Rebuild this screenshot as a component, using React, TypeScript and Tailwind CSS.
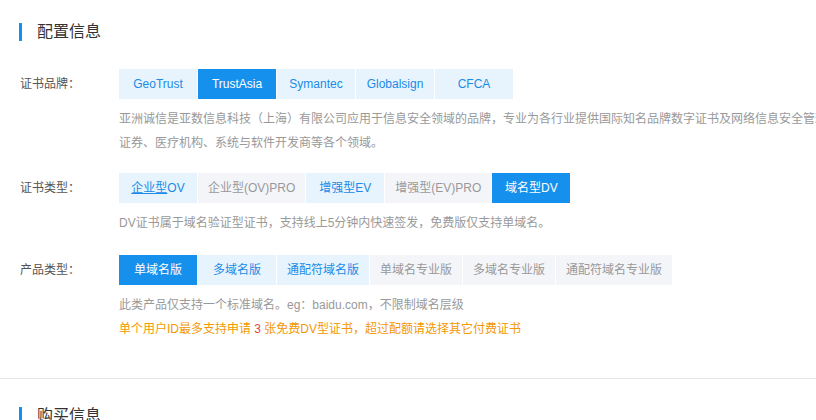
import { useState } from "react";

type Tone = "on" | "off";

interface OptionItem {
    label: React.ReactNode;
    tone: Tone;
}

const brands: OptionItem[] = [
    { label: "GeoTrust", tone: "on" },
    { label: "TrustAsia", tone: "on" },
    { label: "Symantec", tone: "on" },
    { label: "Globalsign", tone: "on" },
    { label: "CFCA", tone: "on" },
];

const certTypes: OptionItem[] = [
    { label: <><span className="underline">企业型</span>OV</>, tone: "on" },
    { label: "企业型(OV)PRO", tone: "off" },
    { label: "增强型EV", tone: "on" },
    { label: "增强型(EV)PRO", tone: "off" },
    { label: "域名型DV", tone: "on" },
];

const productTypes: OptionItem[] = [
    { label: "单域名版", tone: "on" },
    { label: "多域名版", tone: "on" },
    { label: "通配符域名版", tone: "on" },
    { label: "单域名专业版", tone: "off" },
    { label: "多域名专业版", tone: "off" },
    { label: "通配符域名专业版", tone: "off" },
];

const SectionTitle = ({ title }: { title: string }) => (
    <div className="flex items-center gap-[15px] pl-[19px]">
        <span className="w-[3px] h-[18px] bg-[#1590ec]" />
        <span className="text-[16px] leading-[18px] text-[#333]">{title}</span>
    </div>
);

interface OptionGroupProps {
    items: OptionItem[];
    selected: number;
    onSelect: (i: number) => void;
}

const OptionGroup = ({ items, selected, onSelect }: OptionGroupProps) => (
    <div className="flex gap-px">
        {items.map((item, i) => {
            const active = i === selected;
            const cls = active
                ? "bg-[#1590ec] text-white"
                : item.tone === "on"
                    ? "bg-[#e8f4fd] text-[#1a8be6]"
                    : "bg-[#f4f5f9] text-[#999]";
            return (
                <button
                    key={i}
                    onClick={() => onSelect(i)}
                    className={`h-[30px] min-w-[78px] px-[10px] text-[12px] leading-[30px] text-center whitespace-nowrap ${cls}`}
                >
                    {item.label}
                </button>
            );
        })}
    </div>
);

const Row = ({ label, children }: { label: string; children: React.ReactNode }) => (
    <div className="flex pl-[20px]">
        <div className="w-[99px] shrink-0 text-[12px] leading-[30px] text-[#555]">{label}</div>
        <div className="flex-1">{children}</div>
    </div>
);

const App = () => {
    const [brand, setBrand] = useState(1);
    const [certType, setCertType] = useState(4);
    const [product, setProduct] = useState(0);

    return (
        <div
            className="w-full h-[420px] overflow-hidden bg-white"
            style={{ fontFamily: '"Liberation Sans", "Noto Sans CJK SC", sans-serif' }}
        >
            <div className="w-[1200px]">
                <div className="pt-[23px]">
                    <SectionTitle title="配置信息" />
                </div>

                <div className="mt-[28px]">
                    <Row label="证书品牌：">
                        <OptionGroup items={brands} selected={brand} onSelect={setBrand} />
                        <p className="mt-[8px] text-[12px] leading-[24px] text-[#999]">
                            亚洲诚信是亚数信息科技（上海）有限公司应用于信息安全领域的品牌，专业为各行业提供国际知名品牌数字证书及网络信息安全管理解决方案，服务对象涵盖银行、
                            <br />
                            证券、医疗机构、系统与软件开发商等各个领域。
                        </p>
                    </Row>
                </div>

                <div className="mt-[18px]">
                    <Row label="证书类型：">
                        <OptionGroup items={certTypes} selected={certType} onSelect={setCertType} />
                        <p className="mt-[8px] text-[12px] leading-[24px] text-[#999]">
                            DV证书属于域名验证型证书，支持线上5分钟内快速签发，免费版仅支持单域名。
                        </p>
                    </Row>
                </div>

                <div className="mt-[20px]">
                    <Row label="产品类型：">
                        <OptionGroup items={productTypes} selected={product} onSelect={setProduct} />
                        <p className="mt-[8px] text-[12px] leading-[24px] text-[#999]">
                            此类产品仅支持一个标准域名。eg：baidu.com，不限制域名层级
                        </p>
                        <p className="text-[12px] leading-[24px] text-[#f39800]">
                            单个用户ID最多支持申请 <span className="text-[#e64545]">3</span> 张免费DV型证书，超过配额请选择其它付费证书
                        </p>
                    </Row>
                </div>
            </div>

            <div className="mt-[37px] border-t border-[#e4e4ea]" />

            <div className="pt-[28px]">
                <SectionTitle title="购买信息" />
            </div>
        </div>
    );
};

export default App;
